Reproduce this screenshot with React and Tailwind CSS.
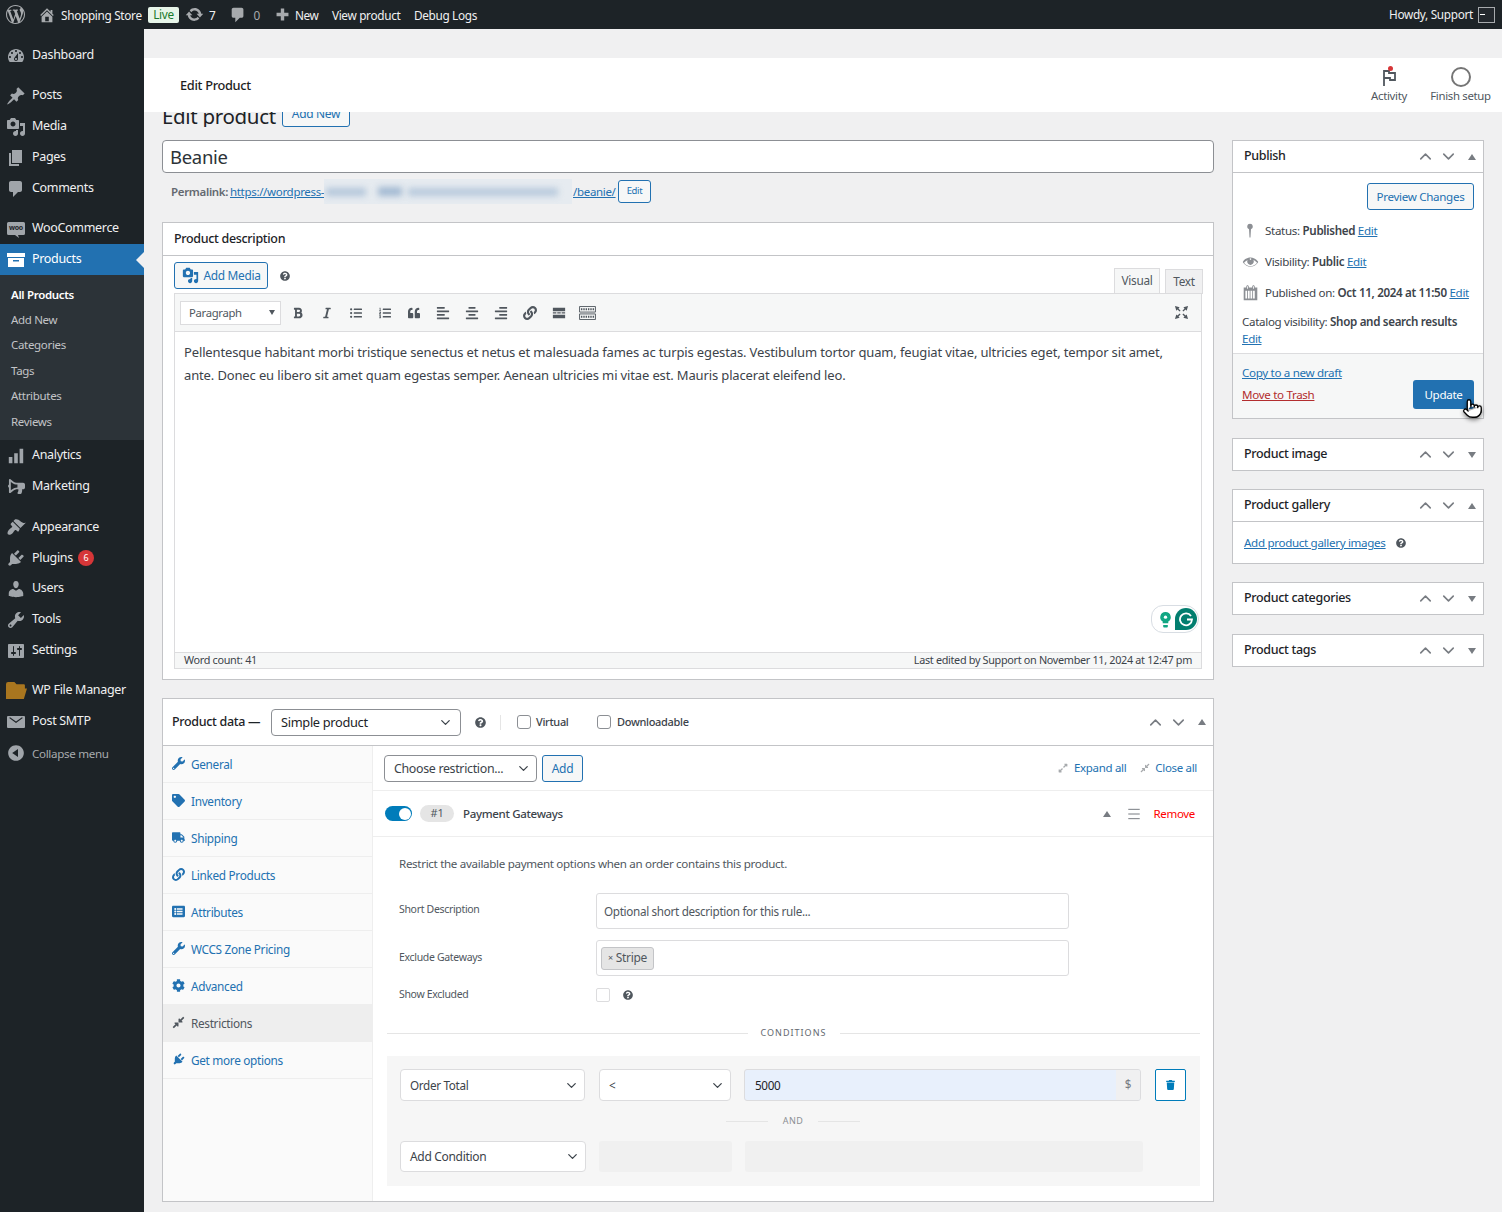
import React from 'react';
import { ChevronDown, ChevronUp, Pointer, Menu } from 'lucide-react';
import { FaWrench, FaTag, FaTruck, FaLink, FaListAlt, FaCog, FaCompressAlt, FaExpandAlt, FaQuestionCircle, FaBold, FaItalic, FaListUl, FaListOl, FaQuoteLeft, FaAlignLeft, FaAlignCenter, FaAlignRight, FaTrash, FaBullhorn } from 'react-icons/fa';

const D = {
  wp: 'M20 10c0-5.51-4.49-10-10-10C4.48 0 0 4.49 0 10c0 5.52 4.48 10 10 10 5.51 0 10-4.48 10-10zM7.78 15.37L4.37 6.22c.55-.02 1.17-.08 1.17-.08.5-.06.44-1.13-.06-1.11 0 0-1.45.11-2.37.11-.18 0-.37 0-.58-.01C4.12 2.69 6.87 1.11 10 1.11c2.33 0 4.45.87 6.05 2.34-.68-.11-1.65.39-1.65 1.58 0 .74.45 1.36.9 2.1.35.61.55 1.36.55 2.46 0 1.49-1.4 5-1.4 5l-3.03-8.37c.54-.02.82-.17.82-.17.5-.05.44-1.25-.06-1.22 0 0-1.44.12-2.38.12-.87 0-2.33-.12-2.33-.12-.5-.03-.56 1.2-.06 1.22l.92.08 1.26 3.41zM17.41 10c.24-.64.74-1.87.43-4.25.7 1.29 1.05 2.71 1.05 4.25 0 3.29-1.73 6.24-4.4 7.78.97-2.59 1.94-5.2 2.92-7.78zM6.1 18.09C3.12 16.65 1.11 13.53 1.11 10c0-1.3.23-2.48.72-3.59C3.25 10.3 4.67 14.2 6.1 18.09zm4.03-6.63l2.58 6.98c-.86.29-1.76.45-2.71.45-.79 0-1.57-.11-2.29-.33.81-2.38 1.62-4.74 2.42-7.1z',
  home: 'M16 8.5l1.53 1.53-1.06 1.06L10 4.62l-6.47 6.47-1.06-1.06L10 2.5l4 4v-2h2v4zm-6-2.46l6 5.99V18H4v-5.97zM12 17v-5H8v5h4z',
  update: 'M10.2 3.28c3.53 0 6.43 2.61 6.92 6h2.08l-3.5 4-3.5-4h2.32c-.45-1.97-2.21-3.45-4.32-3.45-1.45 0-2.73.71-3.54 1.78L4.95 5.66C6.23 4.2 8.11 3.28 10.2 3.28zm-.4 13.44c-3.52 0-6.43-2.61-6.92-6H.8l3.5-4c1.17 1.33 2.33 2.67 3.5 4H5.48c.45 1.97 2.21 3.45 4.32 3.45 1.45 0 2.73-.71 3.54-1.78l1.71 1.95c-1.28 1.46-3.15 2.38-5.25 2.38z',
  comment: 'M5 2h9c1.1 0 2 .9 2 2v7c0 1.1-.9 2-2 2h-2l-5 5v-5H5c-1.1 0-2-.9-2-2V4c0-1.1.9-2 2-2z',
  plus: 'M17 8v4h-5v5H8v-5H3V8h5V3h4v5h5z',
  dash: 'M3.76 16h12.48c1.1-1.37 1.76-3.11 1.76-5 0-4.42-3.58-8-8-8s-8 3.58-8 8c0 1.89.66 3.63 1.76 5zM10 4c.55 0 1 .45 1 1s-.45 1-1 1-1-.45-1-1 .45-1 1-1zM6 6c.55 0 1 .45 1 1s-.45 1-1 1-1-.45-1-1 .45-1 1-1zm8 0c.55 0 1 .45 1 1s-.45 1-1 1-1-.45-1-1 .45-1 1-1zm-5.37 5.55L12 7v6c0 1.1-.9 2-2 2s-2-.9-2-2c0-.57.24-1.08.63-1.45zM4 10c.55 0 1 .45 1 1s-.45 1-1 1-1-.45-1-1 .45-1 1-1zm12 0c.55 0 1 .45 1 1s-.45 1-1 1-1-.45-1-1 .45-1 1-1zm-5 3c0-.55-.45-1-1-1s-1 .45-1 1 .45 1 1 1 1-.45 1-1z',
  pin: 'M10.44 3.02l1.82-1.82 6.36 6.35-1.83 1.82c-1.05-.68-2.48-.57-3.41.36l-.75.75c-.92.93-1.04 2.35-.35 3.41l-1.83 1.82-2.41-2.41-2.8 2.79c-.42.42-3.38 2.71-3.8 2.29s1.86-3.39 2.28-3.81l2.79-2.79L4.1 9.36l1.83-1.82c1.05.69 2.48.57 3.4-.36l.75-.75c.93-.92 1.05-2.35.36-3.41z',
  media: 'M13 11V4c0-.55-.45-1-1-1h-1.67L9 1H5L3.67 3H2c-.55 0-1 .45-1 1v7c0 .55.45 1 1 1h10c.55 0 1-.45 1-1zM7 4.5c1.38 0 2.5 1.12 2.5 2.5S8.38 9.5 7 9.5 4.5 8.38 4.5 7 5.62 4.5 7 4.5zM14 6h5v10.5c0 1.38-1.12 2.5-2.5 2.5S14 17.88 14 16.5s1.12-2.5 2.5-2.5c.17 0 .34.02.5.05V9h-3V6zm-4 8.05V13h2v3.5c0 1.38-1.12 2.5-2.5 2.5S7 17.88 7 16.5 8.12 14 9.5 14c.17 0 .34.02.5.05z',
  pages: 'M6 15V2h10v13H6zm-1 1h8v2H3V5h2v11z',
  woo: 'M2.5 3h15A1.5 1.5 0 0 1 19 4.5v10a1.5 1.5 0 0 1-1.5 1.5H12l1 3-4-3H2.5A1.5 1.5 0 0 1 1 14.500v-10A1.500 1.500 0 0 1 2.500 3z',
  box: 'M1 3h18v4H1V3zm1 5h16v9H2V8zm5 2v1.500h6V10H7z',
  brush: 'M14.480 11.060L7.410 3.990l1.500-1.500c.5-.56 2.300-.47 3.510.32 1.210.8 1.430 1.280 2.910 2.100 1.180.64 2.450 1.260 4.450.85zm-.71.71L6.700 4.700 4.930 6.470c-.39.39-.39 1.020 0 1.410l1.060 1.060c.39.39.39 1.030 0 1.420-.6.6-1.430 1.110-2.210 1.690-.35.26-.7.53-1.010.84-1.350 1.340-1.580 3.600-.9 4.440.84.68 3.100.45 4.440-.9.31-.31.58-.66.84-1.010.58-.78 1.090-1.610 1.690-2.210.39-.39 1.030-.39 1.420 0l1.060 1.060c.39.39 1.020.39 1.410 0z',
  plug: 'M13.110 4.360L9.870 7.600 8 5.730l3.240-3.240c.35-.34 1.050-.2 1.560.32.52.51.66 1.210.31 1.550zm-8 1.770l.91-1.120 9.010 9.010-1.190.84c-.71.71-2.630 1.160-3.820 1.160H6.140L4.900 17.260c-.59.59-1.540.59-2.120 0-.59-.58-.59-1.530 0-2.120l1.240-1.240v-3.880c0-1.130.4-3.190 1.090-3.890zm7.260 3.970l3.240-3.240c.34-.35 1.040-.21 1.550.31.52.51.66 1.210.31 1.550l-3.240 3.250z',
  users: 'M10 9.250c-2.270 0-2.730-3.440-2.730-3.440C7 4.020 7.820 2 9.970 2c2.160 0 2.980 2.020 2.710 3.810 0 0-.41 3.440-2.680 3.440zm0 2.570L12.720 10c2.390 0 4.520 2.330 4.520 4.530v2.490s-3.650 1.130-7.240 1.130c-3.650 0-7.240-1.130-7.240-1.130v-2.490c0-2.250 1.940-4.480 4.470-4.480z',
  tools: 'M16.680 9.770c-1.340 1.340-3.300 1.670-4.950.99l-5.410 6.520c-.99.99-2.590.99-3.580 0s-.99-2.590 0-3.570l6.520-5.420c-.68-1.650-.35-3.610.99-4.950 1.280-1.280 3.120-1.620 4.720-1.060l-2.890 2.890 2.820 2.820 2.860-2.870c.53 1.580.18 3.390-1.080 4.650zM3.810 16.210c.4.39 1.040.39 1.430 0 .4-.4.4-1.040 0-1.430-.39-.4-1.030-.4-1.430 0-.39.39-.39 1.030 0 1.430z',
  settings: 'M18 16V4c0-.55-.45-1-1-1H3c-.55 0-1 .45-1 1v12c0 .55.45 1 1 1h14c.55 0 1-.45 1-1zM8 11h1c.55 0 1 .45 1 1s-.45 1-1 1H8v1.500c0 .28-.22.5-.5.5s-.5-.22-.5-.5V13H6c-.55 0-1-.45-1-1s.45-1 1-1h1V5.500c0-.28.22-.5.5-.5s.5.22.5.5V11zm5-2h-1c-.55 0-1-.45-1-1s.45-1 1-1h1V5.500c0-.28.22-.5.5-.5s.5.22.5.5V7h1c.55 0 1 .45 1 1s-.45 1-1 1h-1v5.500c0 .28-.22.5-.5.5s-.5-.22-.5-.5V9z',
  mail: 'M2 4h16a1 1 0 0 1 1 1v10a1 1 0 0 1-1 1H2a1 1 0 0 1-1-1V5a1 1 0 0 1 1-1zm1.200 2L10 11l6.800-5-.8-.8L10 9.600 4 5.200z',
  collapse: 'M10 2.160c4.330 0 7.840 3.510 7.840 7.840s-3.510 7.840-7.840 7.840S2.160 14.330 2.160 10 5.710 2.160 10 2.160zm2 11.720V6.120L6.180 9.970z',
  folder: 'M2 2h6l2 2h7a1 1 0 0 1 1 1v3h2l-3 10H0V4a2 2 0 0 1 2-2z',
  bars: 'M2 11h4v7H2zM8 7h4v11H8zM14 2h4v16h-4z',
  eye: 'M18.300 9.500C15 4.900 8.500 3.800 3.900 7.200c-1.200.9-2.200 2.100-3 3.400.2.400.5.8.8 1.200 3.300 4.600 9.600 5.600 14.200 2.400.9-.7 1.800-1.500 2.400-2.400.3-.4.5-.8.8-1.200-.1-.4-.4-.7-.8-1.100zm-8.300-3.400c.5 0 1 .4 1 1s-.4 1-1 1-1-.4-1-1 .4-1 1-1zm0 9.500c-3 0-5.800-1.400-7.600-4 1.100-1.500 2.600-2.700 4.300-3.400-.4.500-.6 1.200-.6 1.900 0 2.100 1.700 3.900 3.900 3.900 2.100 0 3.900-1.700 3.900-3.900 0-.7-.2-1.300-.5-1.900 1.700.7 3.200 1.900 4.300 3.400-1.900 2.600-4.800 4-7.700 4z',
  pinSmall: 'M10 1a3.500 3.500 0 0 1 1.200 6.800L10.600 18h-1.200L8.800 7.800A3.500 3.500 0 0 1 10 1z',
  cal: 'M15 4h3v15H2V4h3V3c0-.41.15-.76.44-1.060.29-.29.65-.44 1.060-.44s.77.15 1.060.44c.29.3.44.65.44 1.060v1h4V3c0-.41.15-.76.44-1.060.29-.29.65-.44 1.060-.44s.77.15 1.060.44c.29.3.44.65.44 1.060v1zM6 5.500h1V3c0-.28-.22-.5-.5-.5S6 2.720 6 3v2.500zm7 0h1V3c0-.28-.22-.5-.5-.5s-.5.22-.5.5v2.500zM4 8v9h2V8H4zm3 0v9h2V8H7zm3 0v9h2V8h-2zm3 0v9h2V8h-2z',
};

const Dash = ({ d, className = '' }) => (
  <svg viewBox="0 0 20 20" className={`shrink-0 ${className}`} fill="currentColor"><path d={d} fillRule="evenodd" /></svg>
);

const Menuitem = ({ icon, children, active, extra, dim, gap = '' }) => (
  <div className={`flex items-center h-[31px] relative ${gap} ${active ? 'bg-[#2271b1] text-white' : dim ? 'text-[#a7aaad]' : 'text-[#f0f0f1]'}`}>
    <span className={`w-[32px] flex justify-center shrink-0 ${active ? 'text-white' : 'text-[#a0a5aa]'}`}>{icon}</span>
    <span className={`whitespace-nowrap ${dim ? 'text-[11.600px]' : 'text-[12.500px]'}`}>{children}</span>
    {extra}
    {active && <span className="absolute right-0 top-[8px] w-0 h-0 border-y-[8px] border-y-transparent border-r-[8px] border-r-[#f0f0f1]" />}
  </div>
);

const SubItem = ({ children, on }) => (
  <div className={`h-[25.4px] flex items-center pl-[11px] text-[11.500px] ${on ? 'text-white font-semibold' : 'text-[#c3c4c7]'}`}>{children}</div>
);

const I5 = 'w-[20px] h-[20px]';

const Sidebar = () => (
  <aside className="w-[144px] shrink-0 bg-[#1d2327] pt-[11px] h-[1183px]">
    <Menuitem icon={<Dash d={D.dash} className={I5} />}>Dashboard</Menuitem>
    <Menuitem gap="mt-[9px]" icon={<Dash d={D.pin} className={I5} />}>Posts</Menuitem>
    <Menuitem icon={<Dash d={D.media} className={I5} />}>Media</Menuitem>
    <Menuitem icon={<Dash d={D.pages} className={I5} />}>Pages</Menuitem>
    <Menuitem icon={<Dash d={D.comment} className={I5} />}>Comments</Menuitem>
    <Menuitem gap="mt-[9px]" icon={<span className="relative flex"><Dash d={D.woo} className="w-[20px] h-[20px]" /><span className="absolute left-[3px] top-[4px] text-[7px] font-bold leading-[10px] text-[#1d2327]">woo</span></span>}>WooCommerce</Menuitem>
    <Menuitem active icon={<Dash d={D.box} className={I5} />}>Products</Menuitem>
    <div className="bg-[#2c3338] h-[165px] pt-[6.500px]">
      <SubItem on>All Products</SubItem>
      <SubItem>Add New</SubItem>
      <SubItem>Categories</SubItem>
      <SubItem>Tags</SubItem>
      <SubItem>Attributes</SubItem>
      <SubItem>Reviews</SubItem>
    </div>
    <Menuitem icon={<Dash d={D.bars} className="w-[18px] h-[18px]" />}>Analytics</Menuitem>
    <Menuitem icon={<FaBullhorn className="w-[17px] h-[17px] -scale-x-100" />}>Marketing</Menuitem>
    <Menuitem gap="mt-[9px]" icon={<Dash d={D.brush} className={I5} />}><span className="relative top-[1px]">Appearance</span></Menuitem>
    <Menuitem icon={<Dash d={D.plug} className={I5} />} extra={<span className="ml-[5px] w-[16px] h-[16px] rounded-full bg-[#d63638] text-white text-[9px] flex items-center justify-center">6</span>}><span className="relative top-[1px]">Plugins</span></Menuitem>
    <Menuitem icon={<Dash d={D.users} className={I5} />}>Users</Menuitem>
    <Menuitem icon={<Dash d={D.tools} className={I5} />}>Tools</Menuitem>
    <Menuitem icon={<Dash d={D.settings} className={I5} />}>Settings</Menuitem>
    <Menuitem gap="mt-[9px]" icon={<Dash d={D.folder} className="w-[21px] h-[21px] text-[#a9761f]" />}>WP File Manager</Menuitem>
    <Menuitem icon={<Dash d={D.mail} className={I5} />}>Post SMTP</Menuitem>
    <Menuitem dim icon={<Dash d={D.collapse} className={I5} />}><span className="relative top-[1px]">Collapse menu</span></Menuitem>
  </aside>
);

const TopBar = () => (
  <header className="h-[29px] bg-[#1d2327] flex items-center text-[#f0f0f1] text-[11.800px]">
    <Dash d={D.wp} className="w-[19px] h-[19px] ml-[6px] text-[#a7aaad]" />
    <Dash d={D.home} className="w-[18px] h-[18px] ml-[13px] text-[#a7aaad]" />
    <span className="ml-[5px] w-[81px] whitespace-nowrap pt-[2px]">Shopping Store</span>
    <span className="ml-[6px] w-[31px] h-[16px] bg-[#e7f5e9] text-[#1a7a2c] rounded-[2px] flex items-center justify-center text-[11.800px]">Live</span>
    <Dash d={D.update} className="w-[19px] h-[19px] ml-[6px] text-[#a7aaad]" />
    <span className="ml-[5px] pt-[2px]">7</span>
    <Dash d={D.comment} className="w-[18px] h-[18px] ml-[14px] text-[#a7aaad]" />
    <span className="ml-[6px] text-[#a7aaad] pt-[2px]">0</span>
    <Dash d={D.plus} className="w-[17px] h-[17px] ml-[14px] text-[#a7aaad]" />
    <span className="ml-[4px] w-[25px] pt-[2px]">New</span>
    <span className="ml-[12px] w-[70px] whitespace-nowrap pt-[2px]">View product</span>
    <span className="ml-[12px] whitespace-nowrap pt-[2px]">Debug Logs</span>
    <span className="ml-auto whitespace-nowrap pt-[1px]">Howdy, Support</span>
    <span className="ml-[5px] mr-[7px] w-[17px] h-[16px] border border-[#a7aaad] bg-[#23282d] flex items-center justify-start pl-[1px]"><span className="w-[5px] h-[1px] bg-white" /></span>
  </header>
);

const WcHeader = () => (
  <div className="h-[54px] bg-white flex items-center justify-between">
    <span className="ml-[36px] mt-[2px] text-[12.800px] font-medium text-[#1e1e1e]">Edit Product</span>
    <div className="flex text-[11.400px] text-[#50575e] mr-[6px] gap-[6px]">
      <div className="w-[60px] flex flex-col items-center">
        <span className="relative h-[22px] flex items-center">
          <svg viewBox="0 0 20 20" className="w-[20px] h-[20px]" fill="none" stroke="#50575e" strokeWidth="1.800"><path d="M5 19V4h5v2h6v7h-5v-2H5" /></svg>
          <span className="absolute top-[0px] right-[6px] w-[5px] h-[5px] rounded-full bg-[#d63638]" />
        </span>
        <span className="whitespace-nowrap mt-[-1px]">Activity</span>
      </div>
      <div className="w-[71px] flex flex-col items-center">
        <span className="h-[22px] flex items-center"><span className="w-[20px] h-[20px] rounded-full border-2 border-[#757575]" /></span>
        <span className="whitespace-nowrap mt-[-1px]">Finish setup</span>
      </div>
    </div>
  </div>
);

const Blur = () => (
  <span className="w-[248px] h-[25px] bg-[#e6ebf0] overflow-hidden relative flex items-center gap-[6px] shrink-0">
    <span className="w-[40px] h-[8px] ml-[2px] bg-[#b3c6da] blur-[3px]" />
    <span className="w-[24px] h-[9px] ml-[6px] bg-[#a2b9d2] blur-[3px]" />
    <span className="w-[150px] h-[8px] bg-[#b7c9dc] blur-[3px]" />
  </span>
);

const Toggles = ({ open }) => (
  <div className="flex items-center text-[#787c82]">
    <ChevronUp className="w-[19px] h-[19px] mr-[4px]" strokeWidth={2} />
    <ChevronDown className="w-[19px] h-[19px] mr-[10px]" strokeWidth={2} />
    <span className={`w-0 h-0 border-x-[4px] border-x-transparent ${open ? 'border-b-[6px] border-b-[#787c82]' : 'border-t-[6px] border-t-[#787c82]'} mr-[7px]`} />
  </div>
);

const Box = ({ title, children, mt = '' }) => (
  <section className={`border border-[#c3c4c7] bg-white ${mt}`}>
    <div className="h-[31px] flex items-center justify-between pl-[11px] text-[12.500px] font-medium text-[#1d2327]">
      <span>{title}</span>
      <Toggles open={!!children} />
    </div>
    {children}
  </section>
);

const Lnk = ({ children, className = '' }) => <a className={`text-[#2271b1] underline ${className}`}>{children}</a>;

const Side = () => (
  <div className="w-[252px] shrink-0 text-[11.600px] text-[#3c434a]">
    <Box title="Publish">
      <div className="border-t border-[#c3c4c7]">
        <div className="flex justify-end pt-[10px] pr-[9px]">
          <span className="w-[107px] h-[27px] rounded-[3px] border border-[#2271b1] bg-[#f6f7f7] text-[#2271b1] flex items-center justify-center">Preview Changes</span>
        </div>
        <div className="h-[30px] mt-[6px] flex items-center pl-[9px]"><Dash d={D.pinSmall} className="w-[16px] h-[16px] text-[#8c8f94] mr-[7px]" /><span>Status: <b className="font-semibold">Published</b> <Lnk>Edit</Lnk></span></div>
        <div className="h-[31px] flex items-center pl-[9px]"><Dash d={D.eye} className="w-[17px] h-[17px] text-[#8c8f94] mr-[6px]" /><span>Visibility: <b className="font-semibold">Public</b> <Lnk>Edit</Lnk></span></div>
        <div className="h-[31px] flex items-center pl-[9px]"><Dash d={D.cal} className="w-[17px] h-[17px] text-[#8c8f94] mr-[6px]" /><span className="whitespace-nowrap">Published on: <b className="font-semibold">Oct 11, 2024 at 11:50</b> <Lnk>Edit</Lnk></span></div>
        <div className="pl-[9px] pt-[5px] leading-[17px] h-[45px]">Catalog visibility: <b className="font-semibold">Shop and search results</b><br /><Lnk>Edit</Lnk></div>
      </div>
      <div className="relative h-[65px] bg-[#f6f7f7] border-t border-[#dcdcde] pl-[9px] pt-[10px]">
        <div className="leading-[17px]"><Lnk>Copy to a new draft</Lnk></div>
        <div className="leading-[17px] mt-[5px]"><a className="text-[#b32d2e] underline">Move to Trash</a></div>
        <span className="absolute right-[9px] top-[26px] w-[61px] h-[29px] rounded-[3px] bg-[#2271b1] text-white flex items-center justify-center">Update</span>
        <Pointer className="absolute right-[0px] top-[43px] w-[21px] h-[23px] text-black drop-shadow-[0_2px_2px_rgba(0,0,0,0.450)]" fill="white" strokeWidth={1.500} />
      </div>
    </Box>
    <Box title="Product image" mt="mt-[19px]" />
    <Box title="Product gallery" mt="mt-[18px]">
      <div className="border-t border-[#c3c4c7] h-[42px] flex items-center pl-[11px]">
        <Lnk>Add product gallery images</Lnk>
        <FaQuestionCircle className="w-[10px] h-[10px] ml-[10px] text-[#50575e]" />
      </div>
    </Box>
    <Box title="Product categories" mt="mt-[18px]" />
    <Box title="Product tags" mt="mt-[19px]" />
  </div>
);

const TB = ({ children }) => <span className="w-[29px] h-[29px] flex items-center justify-center text-[#50575e]">{children}</span>;
const I = 'w-[12px] h-[12px]';

const Editor = () => (
  <section className="border border-[#c3c4c7] bg-white mt-[18px] relative">
    <div className="h-[33px] flex items-center pl-[11px] text-[12.500px] font-medium text-[#1d2327] border-b border-[#c3c4c7]">Product description</div>
    <div className="mx-[11px] h-[37px] flex justify-between items-start relative">
      <div className="flex items-center mt-[6px]">
        <span className="w-[94px] h-[27px] rounded-[3px] border border-[#2271b1] bg-[#f6f7f7] text-[#2271b1] text-[11.900px] flex items-center justify-center gap-[5px]">
          <Dash d={D.media} className="w-[17px] h-[17px]" />Add Media
        </span>
        <FaQuestionCircle className="w-[10px] h-[10px] ml-[12px] text-[#50575e]" />
      </div>
      <div className="flex self-end mr-[-1px] text-[11.800px] mb-[-1px] relative gap-[5px] text-[#50575e]">
        <span className="w-[46px] h-[26px] bg-[#f6f7f7] border border-[#dcdcde] border-b-[#f6f7f7] flex items-center justify-center">Visual</span>
        <span className="w-[38px] h-[25px] mt-[1px] bg-[#f0f0f1] border border-[#dcdcde] flex items-center justify-center">Text</span>
      </div>
    </div>
    <div className="mx-[11px] mb-[10px] border border-[#dcdcde] relative">
      <div className="h-[38px] bg-[#f6f7f7] border-b border-[#dcdcde] flex items-center pl-[5px]">
        <span className="w-[101px] h-[24px] bg-white border border-[#dcdcde] flex items-center justify-between pl-[8px] pr-[5px] text-[11.300px] text-[#50575e] mr-[2px]"><span className="pt-[1px]">Paragraph</span><span className="w-0 h-0 border-x-[3.500px] border-x-transparent border-t-[5px] border-t-[#50575e]" /></span>
        <TB><FaBold className={I} /></TB>
        <TB><FaItalic className={I} /></TB>
        <TB><FaListUl className={I} /></TB>
        <TB><FaListOl className={I} /></TB>
        <TB><FaQuoteLeft className={I} /></TB>
        <TB><FaAlignLeft className="w-[14px] h-[14px]" /></TB>
        <TB><FaAlignCenter className="w-[14px] h-[14px]" /></TB>
        <TB><FaAlignRight className="w-[14px] h-[14px]" /></TB>
        <TB><FaLink className="w-[14px] h-[14px]" /></TB>
        <TB>
          <svg viewBox="0 0 16 12" className="w-[14px] h-[12px]" fill="currentColor"><path d="M1 0h14v4H1zM1 8h14v4H1zM1 5h4v1.500H1zM6 5h4v1.500H6zM11 5h4v1.500h-4z" /></svg>
        </TB>
        <TB>
          <svg viewBox="0 0 18 15" className="w-[17px] h-[14px]" fill="none" stroke="currentColor"><path d="M.5.500h17v6h-17zM.5 8.500h17v6h-17z" /><path d="M2 3.500h14M2 11.500h14" strokeDasharray="1.500 1" strokeWidth="2" /></svg>
        </TB>
        <span className="ml-auto mr-[5px]"><TB>
          <svg viewBox="0 0 16 16" className="w-[15px] h-[15px]" fill="currentColor"><path d="M1 1l5 1.500L4.800 3.700l2.200 2.300-1 1-2.300-2.200L2.500 6zM15 1l-1.500 5-1.200-1.200L10 7 9 6l2.200-2.300L10 2.500zM1 15l1.500-5 1.200 1.200L6 9l1 1-2.200 2.300L6 13.500zM15 15l-5-1.500 1.200-1.200L9 10l1-1 2.300 2.200L13.500 10z" /></svg>
        </TB></span>
      </div>
      <div className="h-[320px] pl-[9px] pr-[30px] pt-[9px] text-[13px] tracking-[-0.140px] leading-[23px] text-[#3c434a] relative">
        Pellentesque habitant morbi tristique senectus et netus et malesuada fames ac turpis egestas. Vestibulum tortor quam, feugiat vitae, ultricies eget, tempor sit amet, ante. Donec eu libero sit amet quam egestas semper. Aenean ultricies mi vitae est. Mauris placerat eleifend leo.
        <span className="absolute right-[2px] bottom-[19px] w-[48px] h-[28px] rounded-l-[12px] rounded-r-[14px] bg-white border border-[#d8dde3] flex items-center justify-end gap-[3px] pr-[1px]">
          <svg viewBox="0 0 14 18" className="w-[13px] h-[17px]"><path d="M7 1a5.500 5.500 0 0 1 3 10.200V13H4v-1.800A5.500 5.500 0 0 1 7 1z" fill="#11a683" /><circle cx="7" cy="6.500" r="1.800" fill="#fff" /><path d="M4.500 15h5v1.500a1 1 0 0 1-1 1h-3a1 1 0 0 1-1-1z" fill="#11a683" /></svg>
          <span className="w-[22px] h-[22px] rounded-full rounded-bl-[3px] bg-[#027e6f] flex items-center justify-center">
            <svg viewBox="0 0 16 16" className="w-[16px] h-[16px]" fill="none" stroke="#fff" strokeWidth="1.800"><path d="M13 5a6 6 0 1 0 1 3.500H9" /></svg>
          </span>
        </span>
      </div>
      <div className="h-[16px] bg-[#f6f7f7] border-t border-[#dcdcde] flex items-center justify-between px-[9px] text-[10.850px] text-[#3c434a]">
        <span>Word count: 41</span>
        <span>Last edited by Support on November 11, 2024 at 12:47 pm</span>
      </div>
    </div>
  </section>
);

const Tab = ({ icon, children, on }) => (
  <div className={`h-[37px] flex items-center border-b border-[#eeeeee] pl-[9px] pt-[1px] text-[11.800px] ${on ? 'bg-[#eeeeee] text-[#50575e]' : 'text-[#2271b1]'}`}>
    <span className="w-[19px] shrink-0 -mt-[3px]">{icon}</span>
    <span>{children}</span>
  </div>
);

const Sel = ({ className = '', children, big }) => (
  <span className={`bg-white border flex items-center justify-between rounded-[4px] ${big ? 'border-[#8c8f94]' : 'border-[#dcdcde]'} pl-[9px] pr-[5px] ${className}`}>
    <span className="whitespace-nowrap pt-[1px]">{children}</span>
    <ChevronDown className="w-[15px] h-[15px] text-[#3c434a]" />
  </span>
);

const Check = ({ className = '' }) => <span className={`w-[14px] h-[14px] rounded-[3px] border border-[#8c8f94] bg-white shrink-0 ${className}`} />;

const TI = 'w-[13px] h-[13px]';

const ProductData = () => (
  <section className="border border-[#c3c4c7] bg-white mt-[18px]">
    <div className="h-[47px] flex items-center border-b border-[#c3c4c7] pl-[9px] text-[#1d2327]">
      <span className="text-[12.500px] font-medium w-[99px] whitespace-nowrap">Product data —</span>
      <Sel big className="w-[190px] h-[27px] text-[12.800px] pr-[7px]">Simple product</Sel>
      <FaQuestionCircle className="w-[11px] h-[11px] ml-[14px] text-[#50575e]" />
      <span className="w-px h-[15px] bg-[#e5e5e5] ml-[14px]" />
      <Check className="ml-[16px]" />
      <span className="ml-[5px] text-[11px] font-medium text-[#3c434a] w-[61px]">Virtual</span>
      <Check />
      <span className="ml-[6px] text-[11px] font-medium text-[#3c434a]">Downloadable</span>
      <span className="ml-auto"><Toggles open /></span>
    </div>
    <div className="flex h-[455px]">
      <nav className="w-[210px] shrink-0 bg-[#fafafa] border-r border-[#eeeeee]">
        <Tab icon={<FaWrench className={TI} />}>General</Tab>
        <Tab icon={<FaTag className={TI} />}>Inventory</Tab>
        <Tab icon={<FaTruck className={TI} />}>Shipping</Tab>
        <Tab icon={<FaLink className={TI} />}>Linked Products</Tab>
        <Tab icon={<FaListAlt className={TI} />}>Attributes</Tab>
        <Tab icon={<FaWrench className={TI} />}>WCCS Zone Pricing</Tab>
        <Tab icon={<FaCog className={TI} />}>Advanced</Tab>
        <Tab on icon={<FaCompressAlt className={TI} />}>Restrictions</Tab>
        <Tab icon={<Dash d={D.plug} className="w-[14px] h-[14px]" />}>Get more options</Tab>
      </nav>
      <div className="flex-1 min-w-0 text-[11.600px] text-[#50575e]">
        <div className="h-[45px] border-b border-[#eeeeee] flex items-center pl-[11px] pr-[16px]">
          <Sel big className="w-[153px] h-[27px] text-[12.400px] text-[#3c434a] pl-[7px] mt-[1px]">Choose restriction...</Sel>
          <span className="ml-[5px] mt-[1px] w-[41px] h-[27px] rounded-[3px] border border-[#2271b1] bg-[#f6f7f7] text-[#2271b1] flex items-center justify-center text-[12px]">Add</span>
          <span className="ml-auto flex items-center text-[#2271b1] text-[11.500px]">
            <FaExpandAlt className="w-[10px] h-[10px] text-[#a7aaad] mr-[6px]" />Expand all
            <FaCompressAlt className="w-[10px] h-[10px] text-[#a7aaad] ml-[14px] mr-[5px]" />Close all
          </span>
        </div>
        <div className="h-[46px] border-b border-[#eeeeee] flex items-center pl-[12px] pr-[18px]">
          <span className="w-[27px] h-[15px] rounded-full bg-[#007cba] flex items-center justify-end pr-[1.500px]"><span className="w-[12px] h-[12px] rounded-full bg-white" /></span>
          <span className="ml-[8px] w-[34px] h-[17px] rounded-full bg-[#e5e5e5] text-[#50575e] text-[11px] flex items-center justify-center">#1</span>
          <span className="ml-[9px] text-[#3c434a] font-medium text-[11.500px]">Payment Gateways</span>
          <span className="ml-auto w-0 h-0 border-x-[4px] border-x-transparent border-b-[6px] border-b-[#787c82]" />
          <Menu className="w-[16px] h-[16px] ml-[15px] text-[#787c82]" strokeWidth={1.500} />
          <span className="ml-[11px] text-[#ff0000] text-[11.500px]">Remove</span>
        </div>
        <div className="pl-[26px] pt-[18px] leading-[17px]">Restrict the available payment options when an order contains this product.</div>
        <div className="flex items-center pl-[26px] mt-[21px] text-[10.500px]">
          <span className="w-[197px] -mt-[2px]">Short Description</span>
          <span className="w-[473px] h-[36px] border border-[#dcdcde] rounded-[3px] flex items-center pl-[7px] pt-[2px] text-[11.700px] text-[#50575e]">Optional short description for this rule...</span>
        </div>
        <div className="flex items-center pl-[26px] mt-[11px] text-[10.500px]">
          <span className="w-[197px]">Exclude Gateways</span>
          <span className="w-[473px] h-[36px] border border-[#dcdcde] rounded-[3px] flex items-center pl-[4px]">
            <span className="w-[53px] h-[23px] bg-[#e5e5e5] border border-[#c3c4c7] rounded-[3px] text-[12px] flex items-center justify-center gap-[3px]"><span className="text-[9px]">×</span>Stripe</span>
          </span>
        </div>
        <div className="flex items-center pl-[26px] mt-[11px] text-[10.500px] h-[15px]">
          <span className="w-[197px] pt-[1px]">Show Excluded</span>
          <span className="w-[14px] h-[14px] border border-[#dcdcde] rounded-[2px] shrink-0" />
          <FaQuestionCircle className="w-[10px] h-[10px] ml-[13px]" />
        </div>
        <div className="flex items-center mt-[24px] ml-[14px] mr-[13px] h-[14px] text-[9px] tracking-[1px] text-[#646970]">
          <span className="flex-1 h-px bg-[#e5e5e5]" /><span className="w-[92px] text-center">CONDITIONS</span><span className="flex-1 h-px bg-[#e5e5e5]" />
        </div>
        <div className="mt-[16px] ml-[14px] mr-[13px] h-[130px] bg-[#f6f6f6] pl-[13px] pt-[13px] text-[11.700px] text-[#3c434a]">
          <div className="flex h-[32px]">
            <Sel className="w-[185px] h-[32px]">Order Total</Sel>
            <Sel className="w-[132px] h-[32px] ml-[14px]">&lt;</Sel>
            <span className="w-[397px] h-[32px] ml-[13px] border border-[#dcdcde] rounded-[3px] bg-[#e8f0fc] flex items-center overflow-hidden text-[#1d2327]">
              <span className="flex-1 pl-[10px] pt-[1px]">5000</span>
              <span className="w-[24px] h-full bg-[#f0f0f1] flex items-center justify-center text-[#787c82]">$</span>
            </span>
            <span className="w-[31px] h-[32px] ml-[14px] border border-[#007cba] rounded-[2px] bg-white flex items-center justify-center text-[#007cba]"><FaTrash className="w-[9px] h-[10px]" /></span>
          </div>
          <div className="flex items-center justify-center h-[8px] mt-[16px] mb-[16px] text-[9px] tracking-[0.500px] text-[#8c8f94] w-[786px]">
            <span className="w-[42px] h-px bg-[#e5e5e5]" /><span className="w-[50px] text-center">AND</span><span className="w-[42px] h-px bg-[#e5e5e5]" />
          </div>
          <div className="flex h-[31px]">
            <Sel className="w-[186px] h-[31px] text-[12px]">Add Condition</Sel>
            <span className="w-[133px] h-[31px] ml-[13px] rounded-[3px] bg-[#f0f0f0]" />
            <span className="w-[398px] h-[31px] ml-[13px] rounded-[3px] bg-[#f0f0f0]" />
          </div>
        </div>
      </div>
    </div>
  </section>
);

const Main = () => (
  <main className="flex-1 min-w-0 pt-[29px]">
    <WcHeader />
    <div className="px-[18px]">
      <div className="h-[15px] overflow-hidden flex items-end text-[#1d2327]">
        <span className="text-[20.500px] leading-[30px] whitespace-nowrap mb-[-4px] mr-[8px] w-[112px]">Edit product</span>
        <span className="w-[68px] h-[26px] border border-[#2271b1] rounded-[3px] bg-[#f6f7f7] text-[#2271b1] text-[12px] flex items-center justify-center shrink-0">Add New</span>
      </div>
      <div className="flex gap-[18px] mt-[13px]">
        <div className="w-[1052px] shrink-0">
          <div className="h-[33px] border border-[#8c8f94] rounded-[4px] bg-white flex items-center pl-[7px] pt-[1px] text-[18.500px] text-[#2c3338]">Beanie</div>
          <div className="flex items-center h-[25px] mt-[6px] pl-[9px] text-[11.500px] text-[#646970] whitespace-nowrap">
            <span className="font-semibold w-[59px]">Permalink:</span>
            <a className="text-[#2271b1] underline w-[94px]">https://wordpress-</a>
            <Blur />
            <a className="ml-[1px] text-[#2271b1] underline w-[42px]">/beanie/</a>
            <span className="ml-[3px] w-[33px] h-[23px] border border-[#2271b1] rounded-[3px] bg-[#f6f7f7] text-[#2271b1] text-[9.500px] flex items-center justify-center">Edit</span>
          </div>
          <Editor />
          <ProductData />
        </div>
        <Side />
      </div>
    </div>
  </main>
);

export default function App() {
  return (
    <div className="w-[1502px] h-[1212px] overflow-hidden bg-[#f0f0f1] font-['Noto_Sans',sans-serif] tracking-[-0.02em]">
      <TopBar />
      <div className="flex">
        <Sidebar />
        <Main />
      </div>
    </div>
  );
}
